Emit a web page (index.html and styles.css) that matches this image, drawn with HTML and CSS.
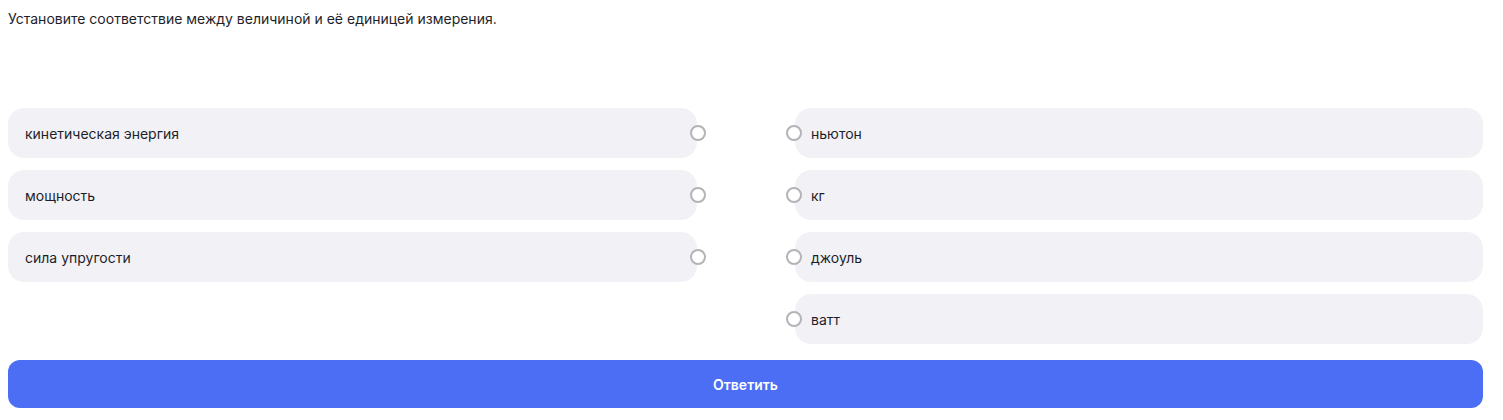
FILE: index.html
```html
<!DOCTYPE html>
<html lang="ru">
<head>
  <meta charset="UTF-8">
  <title>Соответствие</title>
  <link rel="stylesheet" href="styles.css">
</head>
<body>
  <div class="task">
    <p class="question">Установите соответствие между величиной и её единицей измерения.</p>

    <div class="match">
      <div class="col col-left">
        <div class="item"><span>кинетическая энергия</span><i class="dot"></i></div>
        <div class="item"><span>мощность</span><i class="dot"></i></div>
        <div class="item"><span>сила упругости</span><i class="dot"></i></div>
      </div>
      <div class="col col-right">
        <div class="item"><i class="dot"></i><span>ньютон</span></div>
        <div class="item"><i class="dot"></i><span>кг</span></div>
        <div class="item"><i class="dot"></i><span>джоуль</span></div>
        <div class="item"><i class="dot"></i><span>ватт</span></div>
      </div>
    </div>

    <button class="submit">Ответить</button>
  </div>
</body>
</html>
```

FILE: styles.css
```css
body {
  margin: 8px;
  font-family: Inter, 'Noto Sans', sans-serif;
  color: #1e1e2a;
  background: #fff;
}

.task {
  width: 1475px;
}

.question {
  margin: 1px 0 0;
  font-size: 14px;
  line-height: 20px;
}

.match {
  display: grid;
  grid-template-columns: 689px 688px;
  column-gap: 98px;
  margin-top: 79px;
  align-items: start;
}

.col {
  display: flex;
  flex-direction: column;
  gap: 12px;
}

.item {
  position: relative;
  height: 50px;
  display: flex;
  align-items: center;
  background: #f2f2f6;
  border-radius: 16px;
  font-size: 14px;
}

.col-left .item {
  padding-left: 17px;
}

.col-right .item {
  padding-left: 16px;
}

.dot {
  position: absolute;
  top: 17px;
  width: 12px;
  height: 12px;
  border: 2px solid #b4b4b8;
  border-radius: 50%;
  background: #fff;
}

.col-left .dot {
  right: -9px;
}

.col-right .dot {
  left: -9px;
}

.submit {
  display: block;
  width: 100%;
  height: 48px;
  margin-top: 16px;
  border: none;
  border-radius: 12px;
  background: #4b6ef5;
  color: #fff;
  font-family: Inter, 'Noto Sans', sans-serif;
  font-size: 14px;
  font-weight: 600;
}
```
